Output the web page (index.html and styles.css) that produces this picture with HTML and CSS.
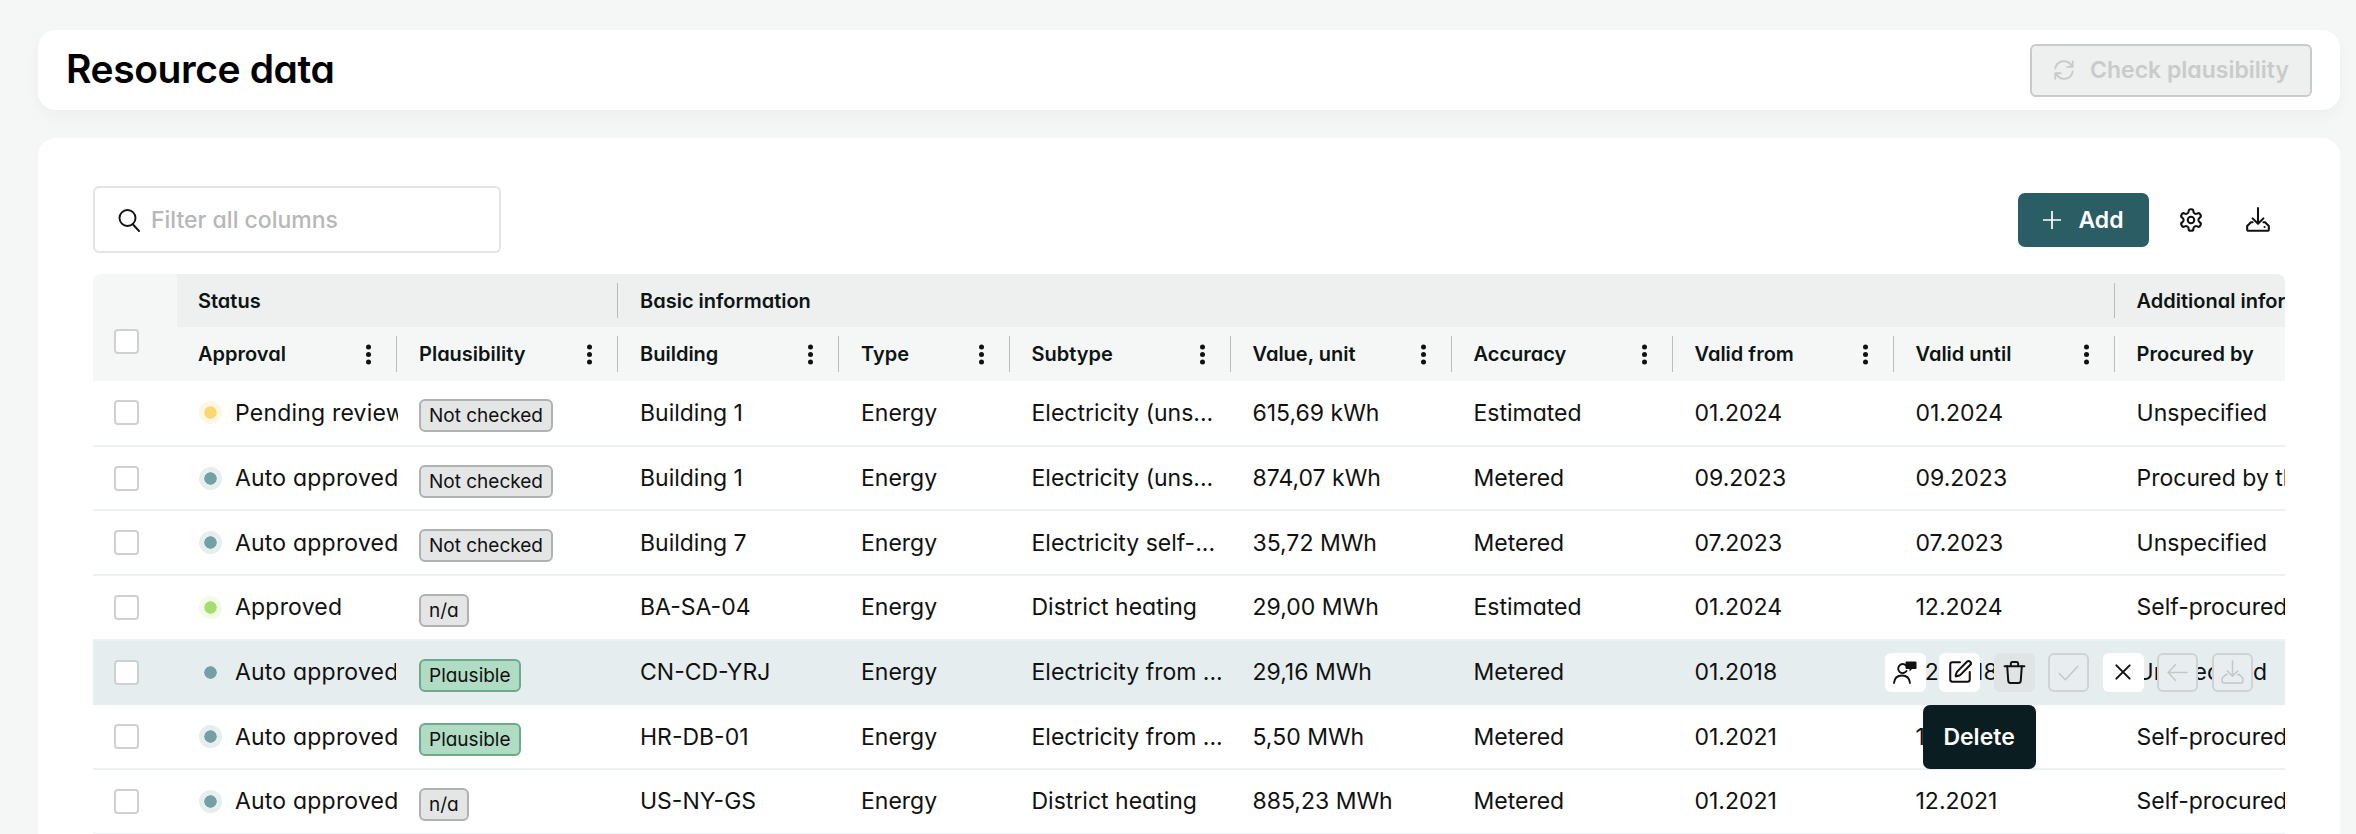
FILE: index.html
```html
<!DOCTYPE html>
<html lang="en">
<head>
<meta charset="utf-8">
<title>Resource data</title>
<link rel="stylesheet" href="styles.css">
</head>
<body>
<main class="page">
  <header class="card title-card">
    <h1 class="title">Resource data</h1>
    <button class="btn-check" disabled>
      <svg class="ico-20" viewBox="0 0 24 24" fill="none" stroke="currentColor" stroke-width="2" stroke-linecap="round" stroke-linejoin="round"><path d="M2.500 10.500A9.500 9.500 0 0 1 19 5.500l2.500 3M21.500 2.500v6h-6"/><path d="M21.500 13.500A9.500 9.500 0 0 1 5 18.500l-2.500-3M2.500 21.500v-6h6"/></svg>
      <span>Check plausibility</span>
    </button>
  </header>

  <section class="card data-card">
    <div class="toolbar">
      <label class="search">
        <svg class="ico-search" viewBox="0 0 24 24" fill="none" stroke="#111" stroke-width="1.900" stroke-linecap="round"><circle cx="10.500" cy="10" r="8"/><path d="M16 16.500l6 6.500"/></svg>
        <span class="placeholder">Filter all columns</span>
      </label>
      <div class="tools">
        <button class="btn-add">
          <svg class="ico-plus" viewBox="0 0 18 18" fill="none" stroke="#fff" stroke-width="1.700"><path d="M9 0v18M0 9h18"/></svg>
          <span>Add</span>
        </button>
        <svg class="ico-gear" viewBox="0 0 24 24" fill="none" stroke="#111" stroke-width="1.900" stroke-linecap="round" stroke-linejoin="round"><path d="M12.220 2h-.44a2 2 0 0 0-2 2v.18a2 2 0 0 1-1 1.730l-.43.25a2 2 0 0 1-2 0l-.15-.08a2 2 0 0 0-2.730.73l-.22.38a2 2 0 0 0 .73 2.730l.15.1a2 2 0 0 1 1 1.720v.51a2 2 0 0 1-1 1.740l-.15.09a2 2 0 0 0-.73 2.730l.22.38a2 2 0 0 0 2.730.73l.15-.08a2 2 0 0 1 2 0l.43.25a2 2 0 0 1 1 1.730V20a2 2 0 0 0 2 2h.44a2 2 0 0 0 2-2v-.18a2 2 0 0 1 1-1.730l.43-.25a2 2 0 0 1 2 0l.15.08a2 2 0 0 0 2.730-.73l.22-.39a2 2 0 0 0-.73-2.730l-.15-.08a2 2 0 0 1-1-1.740v-.5a2 2 0 0 1 1-1.740l.15-.09a2 2 0 0 0 .73-2.730l-.22-.38a2 2 0 0 0-2.730-.73l-.15.08a2 2 0 0 1-2 0l-.43-.25a2 2 0 0 1-1-1.730V4a2 2 0 0 0-2-2z"/><circle cx="12" cy="12" r="3"/></svg>
        <svg class="ico-down" viewBox="0 0 24 24" fill="none" stroke="#111" stroke-width="1.900" stroke-linecap="round" stroke-linejoin="round"><path d="M12 1v14M7 10.500l5 5 5-5"/><path d="M7 14H5.500L2 17.500V20.500A1.500 1.500 0 0 0 3.500 22H20.500a1.500 1.500 0 0 0 1.500-1.500V17.500L18.500 14H17"/><path d="M18 18.500h.1"/></svg>
      </div>
    </div>

    <div class="table-wrap">
      <table class="grid">
        <colgroup>
          <col class="c-check"><col class="c-first"><col class="c-std"><col class="c-std"><col class="c-type"><col class="c-std"><col class="c-std"><col class="c-std"><col class="c-std"><col class="c-std"><col class="c-last">
        </colgroup>
        <thead>
          <tr class="group-row">
            <th class="check-head" rowspan="2"><span class="box"></span></th>
            <th colspan="2">Status</th>
            <th colspan="7"><span class="sep"></span>Basic information</th>
            <th><span class="sep"></span>Additional information</th>
          </tr>
          <tr class="col-row">
            <th><div class="hc">Approval<i class="dots"></i></div></th>
            <th><span class="sep"></span><div class="hc">Plausibility<i class="dots"></i></div></th>
            <th><span class="sep"></span><div class="hc">Building<i class="dots"></i></div></th>
            <th><span class="sep"></span><div class="hc">Type<i class="dots"></i></div></th>
            <th><span class="sep"></span><div class="hc">Subtype<i class="dots"></i></div></th>
            <th><span class="sep"></span><div class="hc">Value, unit<i class="dots"></i></div></th>
            <th><span class="sep"></span><div class="hc">Accuracy<i class="dots"></i></div></th>
            <th><span class="sep"></span><div class="hc">Valid from<i class="dots"></i></div></th>
            <th><span class="sep"></span><div class="hc">Valid until<i class="dots"></i></div></th>
            <th><span class="sep"></span><div class="hc">Procured by</div></th>
          </tr>
        </thead>
        <tbody>
          <tr>
            <td class="chk"><span class="box"></span></td>
            <td class="status-cell"><div class="status"><i class="dot pending"></i><span>Pending review</span></div></td>
            <td><span class="badge grey">Not checked</span></td>
            <td>Building 1</td><td>Energy</td><td>Electricity (uns...</td><td>615,69 kWh</td><td>Estimated</td><td>01.2024</td><td>01.2024</td><td>Unspecified</td>
          </tr>
          <tr>
            <td class="chk"><span class="box"></span></td>
            <td class="status-cell"><div class="status"><i class="dot auto"></i><span>Auto approved</span></div></td>
            <td><span class="badge grey">Not checked</span></td>
            <td>Building 1</td><td>Energy</td><td>Electricity (uns...</td><td>874,07 kWh</td><td>Metered</td><td>09.2023</td><td>09.2023</td><td>Procured by third party</td>
          </tr>
          <tr>
            <td class="chk"><span class="box"></span></td>
            <td class="status-cell"><div class="status"><i class="dot auto"></i><span>Auto approved</span></div></td>
            <td><span class="badge grey">Not checked</span></td>
            <td>Building 7</td><td>Energy</td><td>Electricity self-...</td><td>35,72 MWh</td><td>Metered</td><td>07.2023</td><td>07.2023</td><td>Unspecified</td>
          </tr>
          <tr>
            <td class="chk"><span class="box"></span></td>
            <td class="status-cell"><div class="status"><i class="dot ok"></i><span>Approved</span></div></td>
            <td><span class="badge grey">n/a</span></td>
            <td>BA-SA-04</td><td>Energy</td><td>District heating</td><td>29,00 MWh</td><td>Estimated</td><td>01.2024</td><td>12.2024</td><td>Self-procured</td>
          </tr>
          <tr class="active">
            <td class="chk"><span class="box"></span></td>
            <td class="status-cell"><div class="status"><i class="dot auto"></i><span>Auto approved</span></div></td>
            <td><span class="badge green">Plausible</span></td>
            <td>CN-CD-YRJ</td><td>Energy</td><td>Electricity from ...</td><td>29,16 MWh</td><td>Metered</td><td>01.2018</td><td>12.2018</td>
            <td class="last-cell">Unspecified
              <div class="actions">
                <span class="act on"><svg class="i-person" viewBox="0 0 24 24" fill="none" stroke="#111" stroke-width="1.900" stroke-linecap="round"><path d="M13 5.500A4.500 4.500 0 1 0 13.500 11"/><path d="M1 23c.5-5 3.500-7.500 8-7.500s7.500 2.500 8 7.500"/><path d="M13.500 1.500h9a1 1 0 0 1 1 1v5.500a1 1 0 0 1-1 1h-3.500l-2.500 2.500V9h-3a1 1 0 0 1-1-1V2.500a1 1 0 0 1 1-1z" fill="#111" stroke="none"/></svg></span>
                <span class="act on"><svg class="i-pen" viewBox="0 0 24 24" fill="none" stroke="#111" stroke-width="1.900" stroke-linecap="round" stroke-linejoin="round"><path d="M12 3H5a2 2 0 0 0-2 2v14a2 2 0 0 0 2 2h14a2 2 0 0 0 2-2v-7"/><path d="M18.375 2.625a1 1 0 0 1 3 3l-9.013 9.014a2 2 0 0 1-.853.505l-2.873.84a.5.5 0 0 1-.62-.62l.84-2.873a2 2 0 0 1 .506-.852z"/></svg></span>
                <span class="act hover"><svg class="i-trash" viewBox="0 0 24 24" fill="none" stroke="#111" stroke-width="1.900" stroke-linecap="round" stroke-linejoin="round"><path d="M2.500 6h19M8.500 5.500V3.500a1.500 1.500 0 0 1 1.500-1.500h4a1.500 1.500 0 0 1 1.500 1.500v2"/><path d="M5 6l1 14a2 2 0 0 0 2 2h8a2 2 0 0 0 2-2l1-14"/></svg></span>
                <span class="act off"><svg class="i-wide" viewBox="0 0 24 24" fill="none" stroke="currentColor" stroke-width="1.500" stroke-linecap="round" stroke-linejoin="round"><path d="M3 13l6 6L21 6"/></svg></span>
                <span class="act on"><svg class="i-x" viewBox="0 0 24 24" fill="none" stroke="#111" stroke-width="2.400" stroke-linecap="round"><path d="M4 4l16 16M20 4L4 20"/></svg></span>
                <span class="act off"><svg class="i-wide" viewBox="0 0 24 24" fill="none" stroke="currentColor" stroke-width="1.500" stroke-linecap="round" stroke-linejoin="round"><path d="M21 12H3M10 4.500L3 12l7 7.500"/></svg></span>
                <span class="act off"><svg class="i-wide" viewBox="0 0 24 24" fill="none" stroke="currentColor" stroke-width="1.500" stroke-linecap="round" stroke-linejoin="round"><path d="M12 1v14M7 10.500l5 5 5-5"/><path d="M7 14H5.500L2 17.500V20.500A1.500 1.500 0 0 0 3.500 22H20.500a1.500 1.500 0 0 0 1.500-1.500V17.500L18.500 14H17"/></svg></span>
                <div class="tooltip">Delete</div>
              </div>
            </td>
          </tr>
          <tr>
            <td class="chk"><span class="box"></span></td>
            <td class="status-cell"><div class="status"><i class="dot auto"></i><span>Auto approved</span></div></td>
            <td><span class="badge green">Plausible</span></td>
            <td>HR-DB-01</td><td>Energy</td><td>Electricity from ...</td><td>5,50 MWh</td><td>Metered</td><td>01.2021</td><td>12.2021</td><td>Self-procured</td>
          </tr>
          <tr>
            <td class="chk"><span class="box"></span></td>
            <td class="status-cell"><div class="status"><i class="dot auto"></i><span>Auto approved</span></div></td>
            <td><span class="badge grey">n/a</span></td>
            <td>US-NY-GS</td><td>Energy</td><td>District heating</td><td>885,23 MWh</td><td>Metered</td><td>01.2021</td><td>12.2021</td><td>Self-procured</td>
          </tr>
        </tbody>
      </table>
    </div>
  </section>
</main>
</body>
</html>
```
FILE: styles.css
```css
* { box-sizing: border-box; }
html, body { margin: 0; height: 834px; overflow: hidden; }
body {
  background: #f5f7f6;
  color: #0d1414;
  font-family: Inter, "Noto Sans", sans-serif;
  font-feature-settings: "cv11" 1;
}
.page { padding: 30px 16px 0 38px; display: flex; flex-direction: column; gap: 28px; }
.card { background: #fff; border-radius: 18px; }
.title-card {
  height: 80px;
  display: flex;
  align-items: center;
  justify-content: space-between;
  padding: 0 28px 0 28px;
  box-shadow: 0 6px 14px rgba(30, 60, 60, .04);
}
.title { margin: 0 0 4px; font-size: 39px; font-weight: 600; letter-spacing: -.4px; color: #000; }
.btn-check {
  width: 282px; height: 53px;
  display: flex; align-items: center; justify-content: center; gap: 15px;
  background: #eeefef; color: #c9cbcb;
  border: 2px solid #c9cbcb; border-radius: 6px;
  font: 600 23px Inter, sans-serif; font-feature-settings: "cv11" 1;
}
.ico-20 { width: 22px; height: 22px; }

.data-card { padding: 48px 55px 0 55px; height: 720px; }
.toolbar { display: flex; justify-content: space-between; height: 67px; margin-bottom: 21px; }
.search {
  width: 408px; height: 67px;
  display: flex; align-items: center; gap: 10px; padding-left: 22px;
  border: 2px solid #e3e5e5; border-radius: 6px;
}
.ico-search { width: 24px; height: 24px; }
.placeholder { font-size: 23px; font-weight: 500; color: #b6b8b8; }
.tools { display: flex; align-items: center; padding-top: 1px; padding-right: 14px; }
.btn-add {
  width: 131px; height: 54px;
  display: flex; align-items: center; justify-content: center; gap: 17px;
  background: #2a5d64; color: #fff; border: 0; border-radius: 7px;
  font: 600 23px Inter, sans-serif; font-feature-settings: "cv11" 1;
}
.ico-plus { width: 18px; height: 18px; }
.ico-gear { width: 26px; height: 26px; margin-left: 29px; }
.ico-down { width: 26px; height: 26px; margin-left: 41px; }

.table-wrap { width: 2192px; overflow: hidden; border-radius: 8px 8px 0 0; }
.grid { border-collapse: collapse; table-layout: fixed; width: 2320.500px; font-size: 23px; }
.c-check { width: 84px; }
.c-first { width: 219px; }
.c-std { width: 221px; }
.c-type { width: 170.500px; }
.c-last { width: 300px; }
th { position: relative; text-align: left; font-weight: 600; font-size: 20px; padding: 0 23px; color: #0d1414; white-space: nowrap; }
.group-row th { height: 53px; background: #eeefef; }
.col-row th { height: 54px; background: #f5f7f6; }
.check-head { background: #f5f7f6 !important; padding: 0; }
.check-head .box { position: absolute; left: 21px; top: 55px; }
.group-row th:nth-child(2), .col-row th:first-child { padding-left: 21px; }
.sep { position: absolute; left: 0; top: 9px; bottom: 9px; width: 1px; background: #b9bcbc; }
.hc { display: flex; align-items: center; justify-content: space-between; padding-right: 2px; }
.dots { display: block; width: 5px; height: 5px; border-radius: 50%; background: #111; box-shadow: 0 -7.500px 0 #111, 0 7.500px 0 #111; }

td { height: 64.700px; padding: 0 23px; border-bottom: 2px solid #edf1f2; white-space: nowrap; overflow: hidden; color: #111; position: relative; }
td.chk { padding: 0 0 0 21px; }
.box { display: block; width: 25px; height: 25px; background: #fff; border: 2px solid #cfd1d1; border-radius: 4px; }
td.status-cell { padding: 0 0 0 22px; overflow: visible; }
.status { display: flex; align-items: center; gap: 13px; width: 199px; overflow: hidden; letter-spacing: .2px; }
.status span { display: block; }
.dot { flex: none; width: 23px; height: 23px; border-radius: 50%; border: 5px solid; background-clip: padding-box; }
.pending { background-color: #fbd774; border-color: #fef7e2; }
.auto { background-color: #74a0a4; border-color: #e6eeef; }
.ok { background-color: #a6df6f; border-color: #f2fbe8; }
.badge { display: inline-block; position: relative; top: 3px; left: 0; height: 33px; line-height: 29px; padding: 0 8px; border: 2px solid; border-radius: 6px; font-size: 19px; }
.grey { background: #e4e5e5; border-color: #b0b2b2; }
.green { background: #b0dcc4; border-color: #6da98a; }
.active td { background: #e6edef; border-bottom-color: #e6edef; }
.active .auto { border-color: #e6edef; }

td.last-cell { overflow: visible; }
.actions { position: absolute; left: -229px; top: 12px; display: flex; gap: 13.500px; z-index: 2; }
.act { position: relative; width: 41px; height: 39px; display: flex; align-items: center; justify-content: center; border-radius: 6px; }
.i-person { width: 24px; height: 24px; }
.i-pen { width: 26px; height: 26px; }
.i-trash { width: 25px; height: 25px; }
.i-wide { width: 25px; height: 25px; }
.i-x { width: 20px; height: 20px; }
.act.on { background: #fff; }
.act.hover { background: #e1e4e4; }
.act.off { background: #e8eeef; border: 2px solid #cfd3d4; color: #c4c8c9; }
.tooltip {
  position: absolute; left: 38px; top: 52px;
  width: 113px; height: 64px;
  display: flex; align-items: center; justify-content: center;
  background: #0a1e22; color: #fff; border-radius: 7px;
  font-size: 23px; font-weight: 600;
}
```
